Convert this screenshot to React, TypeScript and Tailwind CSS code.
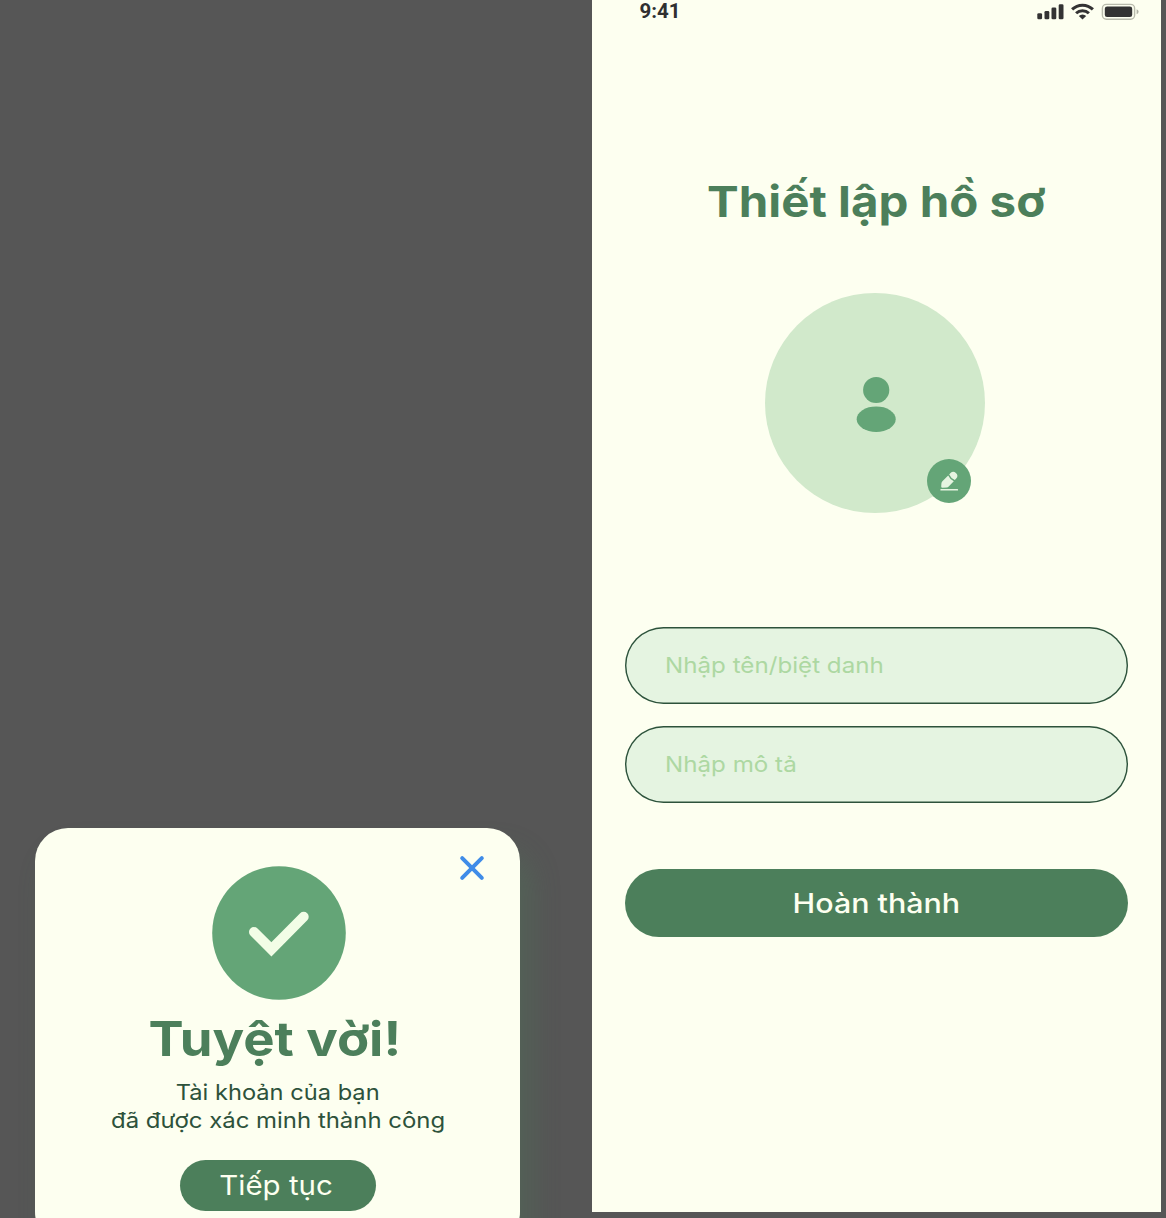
import React from "react";

function StatusBar() {
  return (
    <div className="flex h-[30px] items-start justify-between pl-[48px] pr-[21px]">
      <span className="mt-[-1px] font-['Roboto',sans-serif] text-[20.5px] leading-[24px] font-bold text-[#303030]">
        9:41
      </span>
      <svg width="104" height="24" viewBox="1036 0 104 24" fill="#333333">
        <rect x="1037.3" y="13.2" width="4.8" height="6" rx="1.3" />
        <rect x="1044.5" y="11" width="4.8" height="8.2" rx="1.3" />
        <rect x="1051.5" y="7.5" width="4.8" height="11.7" rx="1.3" />
        <rect x="1058.7" y="4.2" width="4.8" height="15" rx="1.3" />
        <g fill="none" stroke="#333333" strokeWidth="3">
          <path d="M1072.1 9.4a14.8 14.8 0 0 1 20.8 0" />
          <path d="M1076.1 13.3a9.1 9.1 0 0 1 12.8 0" />
        </g>
        <path d="M1078.8 15.9a5.3 5.3 0 0 1 7.4 0l-3.7 3.6z" />
        <rect x="1102.4" y="4.4" width="32.2" height="14.8" rx="4" fill="none" stroke="#b9bbac" strokeWidth="1.4" />
        <rect x="1104.8" y="6.5" width="27.4" height="10.5" rx="2.3" />
        <path d="M1136.6 9.3v5q2-.8 2-2.5t-2-2.5z" fill="#b0b2a5" />
      </svg>
    </div>
  );
}

function Avatar() {
  return (
    <div className="relative ml-[173.5px] h-[220px] w-[220px] rounded-full bg-[#d1e9cb]">
      <svg className="absolute top-[83px] left-[91px]" width="41" height="57" viewBox="0 0 41 57" fill="#64a577">
        <circle cx="20.2" cy="14" r="13.1" />
        <ellipse cx="20.2" cy="43.2" rx="19.5" ry="12.8" />
      </svg>
      <button aria-label="Edit" className="absolute top-[166px] left-[162px] h-[44px] w-[44px] rounded-full bg-[#64a577]">
        <svg width="44" height="44" viewBox="0 0 44 44" fill="#e6f4e1">
          <path d="M22.2 15.5l1.3-1.4a4 4 0 0 1 5.4-.2a4 4 0 0 1 .3 5.6l-1.4 1.6q-3.9-1.8-5.6-5.6z" />
          <path d="M21.2 16.6q1.7 3.8 5.6 5.6l-5.1 5.4q-.8.9-2 1l-4.2.2q-1.4 0-1.3-1.4l.2-3q.1-1.2 1-2.1z" />
          <rect x="13.3" y="30" width="17.8" height="1.6" rx=".7" />
        </svg>
      </button>
    </div>
  );
}

function Field({ text }: { text: string }) {
  return (
    <div className="flex h-[76.5px] items-center rounded-full bg-[#e5f4e1] pb-[2px] pl-[40px] shadow-[inset_0_0_0_1.4px_#2d523b]">
      <span className="inline-block origin-left scale-x-[1.124] whitespace-nowrap text-[21.5px] leading-[28px] text-[#add8a2]">
        {text}
      </span>
    </div>
  );
}

function SuccessCard() {
  return (
    <section className="mt-[828px] ml-[35px] flex h-[417px] w-[485px] shrink-0 flex-col items-center rounded-[33px] bg-[#fdfff0] shadow-[12px_22px_28px_rgba(76,127,91,0.3)]">
      <div className="relative flex w-full justify-center pt-[38px] pl-[3px]">
        <svg width="134" height="134" viewBox="0 0 134 134">
          <circle cx="67" cy="67" r="66.8" fill="#64a577" />
          <path d="M42 66l17.4 17.3L91.7 50.7" fill="none" stroke="#f2fde6" strokeWidth="10" strokeLinecap="round" />
        </svg>
        <button aria-label="Close" className="absolute top-[27px] right-[35px]">
          <svg width="26" height="26" viewBox="0 0 26 26" fill="none" stroke="#3f8ce8" strokeWidth="4" strokeLinecap="round">
            <path d="M3.2 3.2l19.6 19.6M22.8 3.2L3.2 22.8" />
          </svg>
        </button>
      </div>
      <h2 className="mt-[8.5px] scale-x-[1.108] pr-[4px] whitespace-nowrap text-[47.5px] leading-[60px] font-bold text-[#4c7f5b]">
        Tuyệt vời!
      </h2>
      <p className="mt-[10.5px] flex flex-col items-center pl-[1px] text-[21.5px] leading-[27.5px] whitespace-nowrap text-[#2d523b]">
        <span className="scale-x-[1.1]">Tài khoản của bạn</span>
        <span className="scale-x-[1.113]">đã được xác minh thành công</span>
      </p>
      <button className="mt-[25.5px] flex h-[51.5px] w-[196px] items-center justify-center rounded-full bg-[#4c7f5b] pt-[1px] pr-[3px] text-[27px] whitespace-nowrap text-[#fdfff0]">
        <span className="inline-block scale-x-[1.09]">Tiếp tục</span>
      </button>
    </section>
  );
}

export default function App() {
  return (
    <main className="flex h-[1218px] w-[1166px] overflow-hidden bg-[#565656] font-['Inter',sans-serif]">
      <div className="w-[591.5px] shrink-0">
        <SuccessCard />
      </div>
      <section className="h-[1211.5px] w-[569.5px] shrink-0 bg-[#fdfff0]">
        <StatusBar />
        <h1 className="mt-[141px] text-center text-[43px] leading-[60px] font-bold whitespace-nowrap text-[#4c7f5b]">
          <span className="inline-block scale-x-[1.104]">Thiết lập hồ sơ</span>
        </h1>
        <div className="mt-[62px]">
          <Avatar />
        </div>
        <form className="mt-[114.3px] ml-[33px] flex w-[503.5px] flex-col gap-[22.5px]">
          <Field text="Nhập tên/biệt danh" />
          <Field text="Nhập mô tả" />
          <button type="button" className="mt-[43.5px] flex h-[68.5px] items-center justify-center rounded-full bg-[#4c7f5b] pt-[2px] text-[27px] font-medium whitespace-nowrap text-[#fdfff0]">
            <span className="inline-block scale-x-[1.127]">Hoàn thành</span>
          </button>
        </form>
      </section>
    </main>
  );
}
